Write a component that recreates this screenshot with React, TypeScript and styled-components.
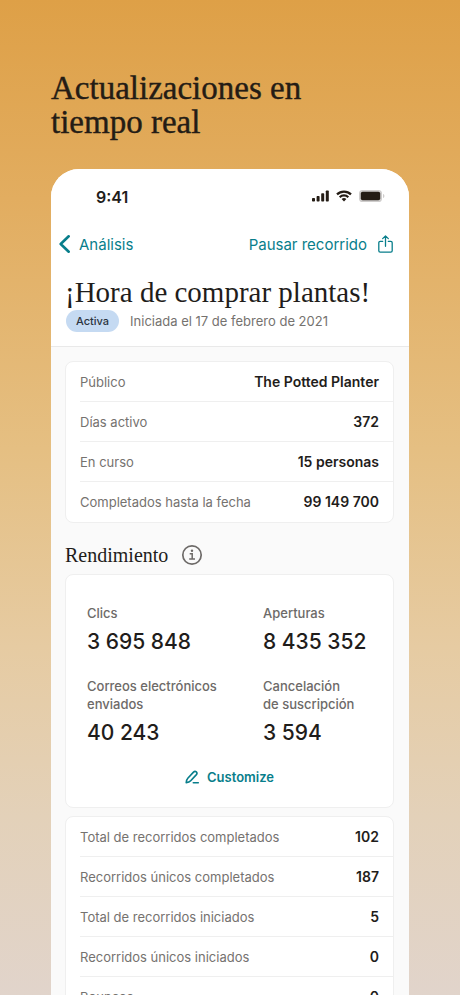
import React from "react";
import styled, { createGlobalStyle } from "styled-components";

const sans = `Inter, "Liberation Sans", Arial, sans-serif`;
const serif = `"Liberation Serif", "Times New Roman", serif`;
const teal = "#087e8b";
const ink = "#241c15";

const GlobalStyle = createGlobalStyle`
  *, *::before, *::after { box-sizing: border-box; }
  body { margin: 0; font-family: ${sans}; color: #1f1d1b; }
  h1, h2, h3, p, dl, dt, dd { margin: 0; font-weight: 400; }
  button { font: inherit; border: 0; padding: 0; background: none; cursor: pointer; }
  svg { display: block; flex: none; }
`;

const Page = styled.main`
  display: flex;
  flex-direction: column;
  height: 100vh;
  overflow: hidden;
  padding: 71px 51px 0;
  background: linear-gradient(#dea047 0%, #e2ad60 20%, #e5bf82 45%, #e6cba2 65%, #e3d1b9 82%, #e1d4cb 100%);
`;

const Headline = styled.h1`
  max-width: 300px;
  font: 400 33px/34px ${serif};
  -webkit-text-stroke: 0.4px ${ink};
  color: ${ink};
`;

const Phone = styled.section`
  flex: 1;
  min-height: 0;
  overflow: hidden;
  margin-top: 30px;
  border-radius: 28px 28px 0 0;
  background: #fafafa;
`;

const Header = styled.header`
  background: #fff;
  border-bottom: 1px solid #e9e9e9;
  padding-bottom: 14px;
`;

const StatusBar = styled.div`
  display: flex;
  align-items: center;
  justify-content: space-between;
  padding: 16px 24px 0 45px;
  height: 40px;
`;

const Clock = styled.time`
  font-size: 16px;
  font-weight: 600;
  line-height: 24px;
`;

const StatusIcons = styled.div`
  display: flex;
  align-items: center;
  gap: 7px;
  margin-top: -2px;
`;

const NavBar = styled.nav`
  display: flex;
  align-items: center;
  justify-content: space-between;
  margin-top: 22px;
  padding: 0 16px 0 8px;
  height: 26px;
`;

const BackLink = styled.a`
  display: flex;
  align-items: center;
  gap: 8px;
  color: ${teal};
  font-size: 15px;
  text-decoration: none;
`;

const NavActions = styled.div`
  display: flex;
  align-items: center;
  gap: 11px;
`;

const NavButton = styled.button`
  color: ${teal};
  && { font-size: 15px; }
`;

const Title = styled.h2`
  margin-top: 18px;
  padding: 0 14px;
  font: 400 29px/34px ${serif};
  white-space: nowrap;
`;

const Meta = styled.div`
  display: flex;
  align-items: center;
  gap: 11px;
  margin-top: 1px;
  padding: 0 15px;
  font-size: 13px;
  color: #75726f;
`;

const Badge = styled.span`
  padding: 0 10px;
  border-radius: 11px;
  background: #c5daf2;
  color: #2b3440;
  font-size: 11px;
  font-weight: 500;
  line-height: 22px;
`;

const Content = styled.div`
  padding: 14px 15px 0 14px;
`;

const Card = styled.section`
  border: 1px solid #efefef;
  border-radius: 8px;
  background: #fff;
`;

const DetailList = styled.dl`
  padding-left: 14px;
`;

const DetailRow = styled.div`
  display: flex;
  align-items: center;
  justify-content: space-between;
  height: 40px;
  padding-right: 14px;
  border-bottom: 1px solid #efefef;
  &:last-child { border-bottom: 0; }
`;

const Term = styled.dt`
  color: #75726f;
  font-size: 13px;
  line-height: 18px;
`;

const Detail = styled.dd`
  font-size: 14px;
  line-height: 18px;
  && { font-weight: 600; }
`;

const SectionHeading = styled.div`
  display: flex;
  align-items: center;
  gap: 13px;
  margin: 20px 0 7px;
  height: 24px;
`;

const SectionTitle = styled.h3`
  font: 400 20px/24px ${serif};
`;

const StatCard = styled(Card)`
  padding: 29px 21px 20px;
  margin-bottom: 8px;
`;

const StatGrid = styled.dl`
  display: grid;
  grid-template-columns: 176px 1fr;
  row-gap: 21px;
`;

const StatLabel = styled.dt`
  color: #6d6a68;
  font-size: 13px;
  && { font-weight: 500; }
  line-height: 18px;
  white-space: pre-line;
`;

const StatValue = styled.dd`
  margin-top: 6px;
  font-size: 21px;
  && { font-weight: 500; }
  line-height: 28px;
`;

const CustomizeButton = styled.button`
  display: flex;
  align-items: center;
  gap: 7px;
  margin: 20px auto 0;
  color: ${teal};
  && { font-size: 13px; font-weight: 600; }
  line-height: 20px;
`;

const summary = [
  ["Público", "The Potted Planter"],
  ["Días activo", "372"],
  ["En curso", "15 personas"],
  ["Completados hasta la fecha", "99 149 700"],
];

const stats = [
  ["Clics", "3 695 848"],
  ["Aperturas", "8 435 352"],
  ["Correos electrónicos\nenviados", "40 243"],
  ["Cancelación\nde suscripción", "3 594"],
];

const totals = [
  ["Total de recorridos completados", "102"],
  ["Recorridos únicos completados", "187"],
  ["Total de recorridos iniciados", "5"],
  ["Recorridos únicos iniciados", "0"],
  ["Bounces", "0"],
];

const SignalIcon = () => (
  <svg width="17" height="12" viewBox="0 0 17 12" fill={ink} aria-hidden="true">
    <rect x="0" y="8" width="3" height="3.500" rx="0.8" />
    <rect x="4.600" y="6" width="3" height="5.500" rx="0.8" />
    <rect x="9.200" y="3.300" width="3" height="8.200" rx="0.8" />
    <rect x="13.800" y="0.500" width="3" height="11" rx="0.8" />
  </svg>
);

const WifiIcon = () => (
  <svg width="16" height="12" viewBox="0 0 16 12" fill="none" stroke={ink} strokeWidth="2.200" aria-hidden="true">
    <path d="M1 4.400a10 10 0 0 1 14 0" />
    <path d="M3.700 7.200a6.200 6.200 0 0 1 8.600 0" />
    <path d="M8 11.500 5.600 9.100a3.500 3.500 0 0 1 4.800 0z" fill={ink} stroke="none" />
  </svg>
);

const BatteryIcon = () => (
  <svg width="26" height="12" viewBox="0 0 26 12" aria-hidden="true">
    <rect x="0" y="0" width="23" height="12" rx="3.600" fill="#cfcdcc" />
    <rect x="1.800" y="1.800" width="19.400" height="8.400" rx="1.800" fill={ink} />
    <path d="M24 4v4c1-.4 1.400-1.100 1.400-2s-.4-1.600-1.400-2z" fill="#cfcdcc" />
  </svg>
);

const BackIcon = () => (
  <svg width="12" height="18" viewBox="0 0 12 18" fill="none" stroke={teal} strokeWidth="2.600" strokeLinecap="round" strokeLinejoin="round" aria-hidden="true">
    <path d="M9.700 1.300 1.700 9l8 7.700" />
  </svg>
);

const ShareIcon = () => (
  <svg width="15" height="18" viewBox="0 0 15 18" fill="none" stroke={teal} strokeWidth="1.300" strokeLinecap="round" strokeLinejoin="round" aria-hidden="true">
    <path d="M4.700 6.300H2.200c-.8 0-1.400.6-1.400 1.400v8c0 .8.6 1.400 1.400 1.400h10.600c.8 0 1.400-.6 1.400-1.400v-8c0-.8-.6-1.400-1.400-1.400h-2.500" />
    <path d="M7.500 11.300V1M4.700 3.600 7.500.9l2.800 2.700" />
  </svg>
);

const InfoIcon = () => (
  <svg width="22" height="22" viewBox="0 0 22 22" fill="none" stroke="#6d6a68" aria-hidden="true">
    <circle cx="11" cy="11" r="9.200" strokeWidth="1.700" />
    <path d="M8.700 9.700h2.500v5.200M8.200 15.100h5.800" strokeWidth="1.500" />
    <circle cx="11" cy="6.700" r="1.200" fill="#6d6a68" stroke="none" />
  </svg>
);

const PencilIcon = () => (
  <svg width="15" height="14" viewBox="0 0 15 14" fill="none" stroke={teal} strokeWidth="1.600" strokeLinejoin="round" strokeLinecap="round" aria-hidden="true">
    <path d="M1.200 12.700c.1-2 .5-3.300 1.600-4.500l5.700-6.100c.8-.8 2-.9 2.800-.2.8.8.8 1.900.1 2.700L5.700 10.800c-1.100 1.200-2.500 1.700-4.500 1.900z" />
    <path d="M8.300 12.700h5" />
  </svg>
);

const Details = ({ rows }: { rows: string[][] }) => (
  <DetailList>
    {rows.map(([term, value]) => (
      <DetailRow key={term}>
        <Term>{term}</Term>
        <Detail>{value}</Detail>
      </DetailRow>
    ))}
  </DetailList>
);

const InfoButton = styled.button``;

export default function App() {
  return (
    <Page>
      <GlobalStyle />
      <Headline>Actualizaciones en tiempo real</Headline>
      <Phone>
        <Header>
          <StatusBar>
            <Clock>9:41</Clock>
            <StatusIcons>
              <SignalIcon />
              <WifiIcon />
              <BatteryIcon />
            </StatusIcons>
          </StatusBar>
          <NavBar>
            <BackLink href="#analisis">
              <BackIcon />
              Análisis
            </BackLink>
            <NavActions>
              <NavButton type="button">Pausar recorrido</NavButton>
              <NavButton type="button" aria-label="Compartir">
                <ShareIcon />
              </NavButton>
            </NavActions>
          </NavBar>
          <Title>¡Hora de comprar plantas!</Title>
          <Meta>
            <Badge>Activa</Badge>
            <p>Iniciada el 17 de febrero de 2021</p>
          </Meta>
        </Header>
        <Content>
          <Card>
            <Details rows={summary} />
          </Card>
          <SectionHeading>
            <SectionTitle>Rendimiento</SectionTitle>
            <InfoButton type="button" aria-label="Información">
              <InfoIcon />
            </InfoButton>
          </SectionHeading>
          <StatCard>
            <StatGrid>
              {stats.map(([label, value]) => (
                <div key={label}>
                  <StatLabel>{label}</StatLabel>
                  <StatValue>{value}</StatValue>
                </div>
              ))}
            </StatGrid>
            <CustomizeButton type="button">
              <PencilIcon />
              Customize
            </CustomizeButton>
          </StatCard>
          <Card>
            <Details rows={totals} />
          </Card>
        </Content>
      </Phone>
    </Page>
  );
}
